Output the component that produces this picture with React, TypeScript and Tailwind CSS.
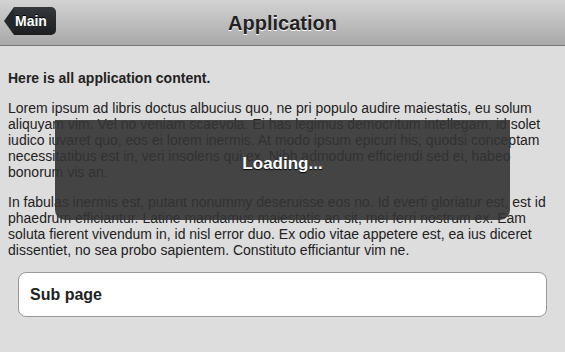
export default function App() {
  return (
    <div
      className="relative w-[565px] h-[352px] overflow-hidden bg-[#dddddd] text-[#222]"
      style={{ fontFamily: '"Liberation Sans", Arial, sans-serif' }}
    >
      {/* Header */}
      <div className="relative h-[46px] border-b border-[#777] bg-gradient-to-b from-[#d3d3d3] to-[#a9a9a9] flex items-center justify-center">
        <div className="absolute left-[4px] top-[7px] flex items-center h-[28px]">
          <div className="w-0 h-0 border-y-[14px] border-y-transparent border-r-[10px] border-r-[#25282b]" />
          <div className="h-[28px] pl-[1px] pr-[9px] flex items-center rounded-r-[5px] bg-gradient-to-b from-[#34383c] to-[#1c1e20] text-white font-bold text-[14px] [text-shadow:0_-1px_0_#000]">
            Main
          </div>
        </div>
        <h1 className="text-[20px] font-bold text-[#222] [text-shadow:0_1px_0_#fff]">Application</h1>
      </div>

      {/* Content */}
      <div className="px-[8px] pt-[24px] text-[14px] leading-[16px]">
        <p className="font-bold">Here is all application content.</p>
        <p className="mt-[14px]">
          Lorem ipsum ad libris doctus albucius quo, ne pri populo audire maiestatis, eu solum aliquyam vim. Vel no veniam scaevola. Ei has legimus democritum intellegam, id solet iudico iuvaret quo, eos ei lorem inermis. At modo ipsum epicuri his, quodsi conceptam necessitatibus est in, veri insolens qui ex. Nibh admodum efficiendi sed ei, habeo bonorum vis an.
        </p>
        <p className="mt-[14px]">
          In fabulas inermis est, putant nonummy deseruisse eos no. Id everti gloriatur est, est id phaedrum efficiantur. Latine mandamus maiestatis an sit, mei ferri nostrum ex. Eam soluta fierent vivendum in, id nisl error duo. Ex odio vitae appetere est, ea ius diceret dissentiet, no sea probo sapientem. Constituto efficiantur vim ne.
        </p>
        <div className="mx-[10px] mt-[14px] h-[45px] rounded-[8px] border border-[#999] bg-white flex items-center px-[11px] text-[16px] font-bold text-[#222]">
          Sub page
        </div>
      </div>

      {/* Loading overlay */}
      <div className="absolute left-[55px] top-[120px] w-[455px] h-[100px] rounded-b-[10px] bg-[#333]/90 flex items-start justify-center pt-[31px]">
        <span className="text-white font-bold text-[17px] [text-shadow:0_1px_1px_#000]">Loading...</span>
      </div>
    </div>
  );
}
